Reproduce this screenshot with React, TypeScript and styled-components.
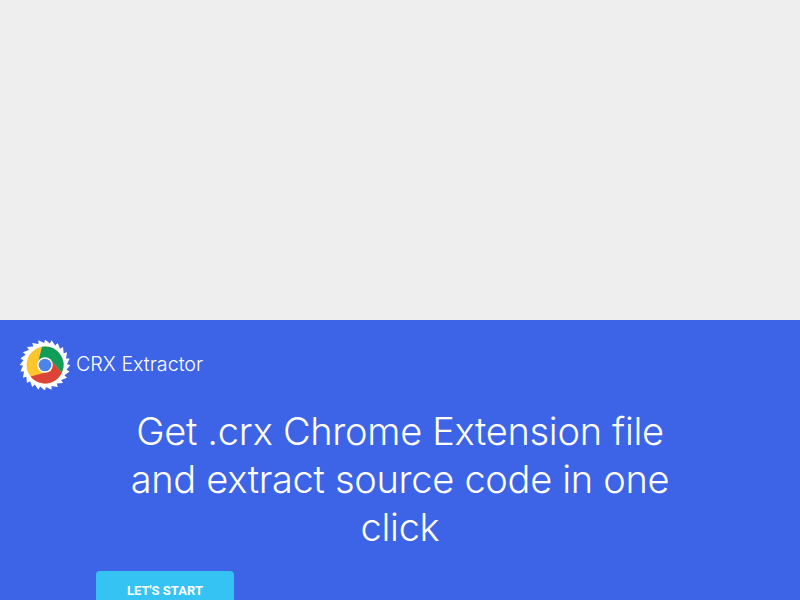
import styled, { createGlobalStyle } from "styled-components";

const GlobalStyle = createGlobalStyle`
  html, body {
    margin: 0;
    padding: 0;
    height: 100%;
    overflow: hidden;
    background: #eeeeee;
  }
`;

const Page = styled.div`
  display: flex;
  flex-direction: column;
  height: 600px;
  overflow: hidden;
`;

const Blank = styled.div`
  flex: 0 0 320px;
  background: #eeeeee;
`;

const Hero = styled.section`
  flex: 1;
  background: #3d64e6;
  color: #fff;
  font-family: Inter, Lato, "Liberation Sans", sans-serif;
`;

const Brand = styled.div`
  display: flex;
  align-items: center;
  gap: 6px;
  padding: 20px 0 0 20px;
`;

const BrandName = styled.span`
  margin-bottom: 2px;
  font-size: 19.7px;
  font-weight: 300;
`;

const Headline = styled.h1`
  margin: 17px 0 0;
  font-size: 38px;
  font-weight: 300;
  line-height: 48px;
  letter-spacing: -0.3px;
  text-align: center;
`;

const Actions = styled.div`
  padding: 20px 0 0 96px;
`;

const StartButton = styled.a`
  display: block;
  width: 138px;
  height: 48px;
  padding-top: 12px;
  box-sizing: border-box;
  border-radius: 4px;
  background: #34c3f3;
  color: #fff;
  font-family: Roboto, sans-serif;
  font-size: 13px;
  font-weight: 700;
  line-height: 15px;
  text-align: center;
`;

const teeth = 24;
const bladePoints = Array.from({ length: teeth }, (_, i) => {
  const a = (i / teeth) * Math.PI * 2;
  const b = ((i + 0.85) / teeth) * Math.PI * 2;
  const at = (r: number, t: number) =>
    `${(r * Math.cos(t)).toFixed(2)},${(r * Math.sin(t)).toFixed(2)}`;
  return `${at(25.5, a)} ${at(22, b)}`;
}).join(" ");

const Logo = () => (
  <svg width="50" height="50" viewBox="-25 -25 50 50">
    <polygon points={bladePoints} fill="#fff" />
    <circle r="18.5" fill="#fdc62e" />
    <path d="M-3 -18.3A18.5 18.5 0 0 1 16.8 7.8L5 -6L-7 -2Z" fill="#0f9d58" />
    <path d="M16.8 7.8A18.5 18.5 0 0 1 -14.5 11.5L6 6L5 -6Z" fill="#db4437" />
    <circle r="7.8" fill="#fff" />
    <circle r="6.3" fill="#4b85ea" />
  </svg>
);

export default function App() {
  return (
    <Page>
      <GlobalStyle />
      <Blank />
      <Hero>
        <Brand>
          <Logo />
          <BrandName>CRX Extractor</BrandName>
        </Brand>
        <Headline>
          Get .crx Chrome Extension file
          <br />
          and extract source code in one
          <br />
          click
        </Headline>
        <Actions>
          <StartButton>LET'S START</StartButton>
        </Actions>
      </Hero>
    </Page>
  );
}
